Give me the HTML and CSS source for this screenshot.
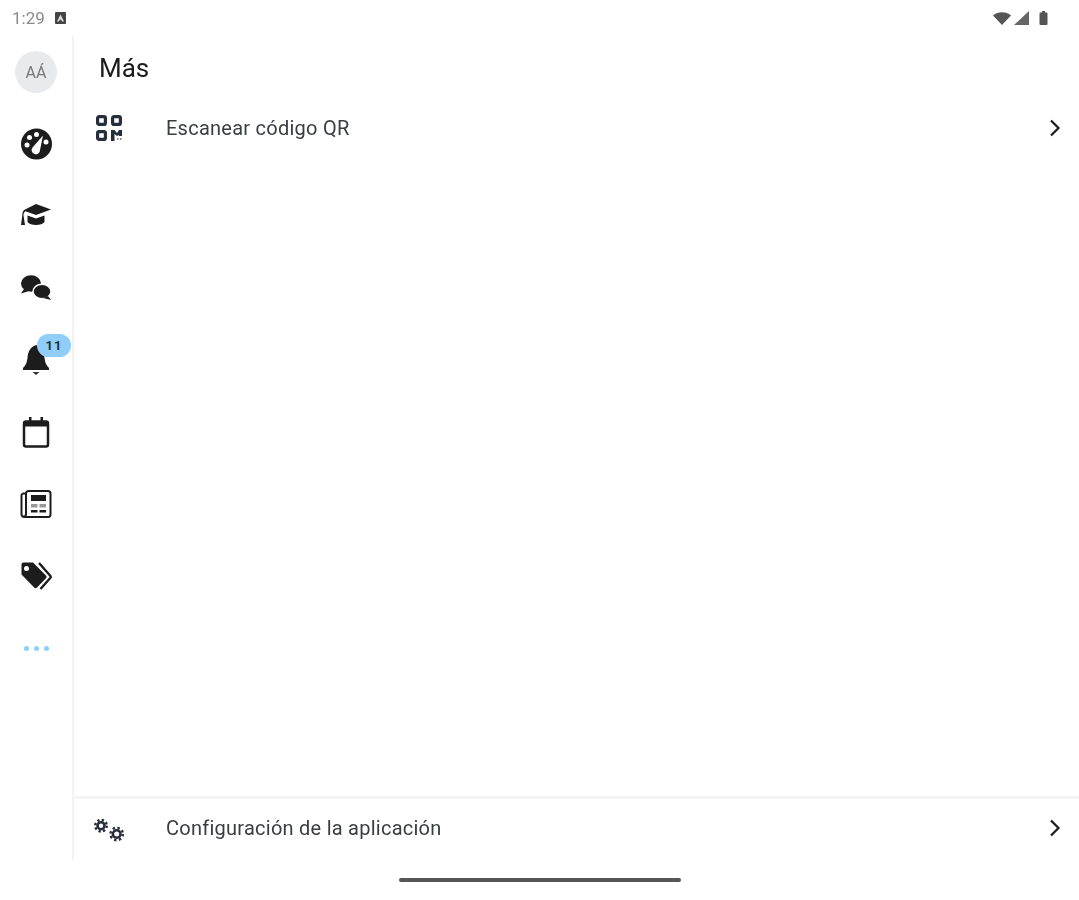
FILE: index.html
```html
<!DOCTYPE html>
<html lang="es">
	<head>
		<meta charset="UTF-8" />
		<meta name="viewport" content="width=device-width, initial-scale=1.0" />
		<title>Más</title>
		<link rel="stylesheet" href="styles.css">
	</head>
	<body>
		<div class="status-bar">
			<div class="status-left">
				<span class="status-time">1:29</span>
				<svg class="status-note" width="11" height="12" viewBox="0 0 11 12"><rect width="11" height="12" rx="1" fill="#444"/><path d="M5.500 2.500 9 9.500H7.400L5.500 7.300 3.600 9.500H2z" fill="#ddd"/></svg>
			</div>
			<div class="status-right">
				<svg class="status-wifi" width="18" height="13" viewBox="0 0 18 13"><path d="M0 3.500C5 -.8 13 -.8 18 3.500L9 13z" fill="#555"/></svg>
				<svg class="status-signal" width="15" height="14" viewBox="0 0 15 14"><path d="M15 0V14H0z" fill="#666"/></svg>
				<svg width="9" height="14" viewBox="0 0 9 14"><path d="M3 0h3v1.500h1.500a1 1 0 0 1 1 1V13a1 1 0 0 1-1 1H1.500a1 1 0 0 1-1-1V2.500a1 1 0 0 1 1-1H3z" fill="#555"/></svg>
			</div>
		</div>

		<div class="app">
			<nav class="rail">
				<div class="avatar">AÁ</div>

				<div class="rail-item">
					<svg width="32" height="32" viewBox="0 0 32 32"><circle cx="16.500" cy="16" r="15.500" fill="#1c1c1c"/><circle cx="7" cy="17" r="2.500" fill="#fff"/><circle cx="9.500" cy="9.500" r="2.500" fill="#fff"/><circle cx="16.500" cy="6.500" r="2.500" fill="#fff"/><circle cx="26" cy="14" r="2.500" fill="#fff"/><path d="M23 7.500 20 22a4.200 4.200 0 1 1-7.500-2.500z" fill="#fff"/></svg>
				</div>
				<div class="rail-item">
					<svg width="32" height="26" viewBox="0 0 32 26"><path d="M16 1 31 6.500 16 12 5.500 8.200C4 9 3.500 10.500 3.500 12.500L5 22H1l1.300-9.500C2.300 10 3 8 4 7z" fill="#1c1c1c"/><path d="M7.500 12.500 16 15.500 24.500 12.500V19C22 23 10 23 7.500 19z" fill="#1c1c1c"/></svg>
				</div>
				<div class="rail-item">
					<svg width="32" height="26" viewBox="0 0 32 26"><ellipse cx="11" cy="8.500" rx="10" ry="8.200" fill="#1c1c1c"/><path d="M4 14 1 18.500 9 16z" fill="#1c1c1c"/><ellipse cx="22" cy="16.500" rx="9" ry="7.200" fill="#1c1c1c" stroke="#fff" stroke-width="1.500"/><path d="M28 21 31 25 23 23z" fill="#1c1c1c"/></svg>
				</div>
				<div class="rail-item">
					<svg width="28" height="32" viewBox="0 0 28 32"><path d="M14 1C8 3 6 8 5.500 14 5 18 4 21 1 24H27C24 21 23 18 22.500 14 22 8 20 3 14 1z" fill="#1c1c1c"/><rect x="1" y="24" width="26" height="2" fill="#1c1c1c"/><path d="M10.500 28h7L14 31z" fill="#333"/></svg>
					<span class="badge">11</span>
				</div>
				<div class="rail-item">
					<svg width="28" height="32" viewBox="0 0 28 32"><rect x="2" y="5.500" width="24" height="25" rx="2" fill="#fff" stroke="#1c1c1c" stroke-width="2.500"/><rect x="2" y="5.500" width="24" height="5" fill="#1c1c1c"/><rect x="7" y="1" width="2.500" height="6" fill="#1c1c1c"/><rect x="18.500" y="1" width="2.500" height="6" fill="#1c1c1c"/></svg>
				</div>
				<div class="rail-item">
					<svg width="32" height="28" viewBox="0 0 32 28"><path d="M6 3.500H3.500a2 2 0 0 0-2 2V24a3 3 0 0 0 3 3H28a2.500 2.500 0 0 0 2.500-2.500V3.500A2.500 2.500 0 0 0 28 1H8.500A2.500 2.500 0 0 0 6 3.500V24a3 3 0 0 1-3 3" fill="none" stroke="#1c1c1c" stroke-width="2"/><rect x="11" y="5" width="15" height="6" fill="#1c1c1c"/><rect x="11" y="14" width="6.500" height="3.500" fill="#999"/><rect x="19.500" y="14" width="6.500" height="3.500" fill="#999"/><rect x="11" y="20" width="6.500" height="2.500" fill="#1c1c1c"/><rect x="19.500" y="20" width="6.500" height="2.500" fill="#1c1c1c"/></svg>
				</div>
				<div class="rail-item">
					<svg width="32" height="28" viewBox="0 0 32 28"><path d="M1.500 2.500A2 2 0 0 1 3.500.5H13L26 13.500a2 2 0 0 1 0 2.800L17 25.500a2 2 0 0 1-2.800 0L1.500 12.500zM6.500 4a2.500 2.500 0 1 0 0 5 2.500 2.500 0 0 0 0-5z" fill="#1c1c1c" fill-rule="evenodd"/><path d="M19 1 30 13.500a2 2 0 0 1 0 2.800L20.500 27" fill="none" stroke="#1c1c1c" stroke-width="2.400"/></svg>
				</div>
				<div class="rail-item">
					<div class="dots"><i></i><i></i><i></i></div>
				</div>
			</nav>

			<main class="content">
				<h1 class="title">Más</h1>

				<div class="row">
					<svg class="row-icon" width="28" height="28" viewBox="0 0 28 28"><g fill="none" stroke="#262d3b" stroke-width="3.200"><rect x="2.600" y="2.600" width="7.800" height="7.800" rx="1.500"/><rect x="17.600" y="2.600" width="7.800" height="7.800" rx="1.500"/><rect x="2.600" y="17.600" width="7.800" height="7.800" rx="1.500"/></g><path d="M16 16h3.500l2.500 3 2-3h3v6h-3v-1l-2 1-2.500-2v7H16z" fill="#262d3b"/><path d="M22 24h1.500v2H22zM25 24h1.500v2H25z" fill="#888"/></svg>
					<span class="row-label">Escanear código QR</span>
					<svg class="chevron" width="12" height="18" viewBox="0 0 12 18"><path d="M2 1.500 9.500 9 2 16.500" fill="none" stroke="#1c1c1c" stroke-width="2.200"/></svg>
				</div>

				<div class="spacer"></div>

				<div class="row row-bottom">
					<svg class="row-icon" width="32" height="26" viewBox="0 0 32 26"><g fill="none" stroke="#262d3b"><circle cx="7" cy="8.700" r="3.500" stroke-width="2.600"/><circle cx="7" cy="8.700" r="5.800" stroke-width="2.400" stroke-dasharray="2.300 2.256"/><circle cx="22.700" cy="17" r="3.800" stroke-width="2.600"/><circle cx="22.700" cy="17" r="6.200" stroke-width="2.400" stroke-dasharray="2.400 2.470"/></g></svg>
					<span class="row-label">Configuración de la aplicación</span>
					<svg class="chevron" width="12" height="18" viewBox="0 0 12 18"><path d="M2 1.500 9.500 9 2 16.500" fill="none" stroke="#1c1c1c" stroke-width="2.200"/></svg>
				</div>
			</main>
		</div>

		<div class="nav-bar"><div class="home-pill"></div></div>
	</body>
</html>
```
FILE: styles.css
```css
* {
	box-sizing: border-box;
}
body {
	margin: 0;
	height: 900px;
	overflow: hidden;
	background: #fff;
	font-family: Roboto, "Liberation Sans", sans-serif;
	color: #2b2e33;
	display: flex;
	flex-direction: column;
	filter: blur(0.5px);
}
.status-bar {
	height: 36px;
	padding: 0 31px 0 12px;
	display: flex;
	align-items: center;
	justify-content: space-between;
}
.status-left {
	display: flex;
	align-items: center;
	gap: 10px;
}
.status-time {
	font-size: 17px;
	color: #8a8a8a;
}
.status-right {
	display: flex;
	align-items: center;
}
.status-wifi {
	margin-right: 3px;
}
.status-signal {
	margin-right: 10px;
}
.app {
	height: 824px;
	display: flex;
}
.rail {
	width: 74px;
	border-right: 2px solid #f2f2f3;
	display: flex;
	flex-direction: column;
	align-items: center;
}
.avatar {
	width: 42px;
	height: 42px;
	margin-top: 15px;
	margin-bottom: 15px;
	border-radius: 50%;
	background: #e9eaec;
	color: #75787d;
	font-size: 16px;
	display: flex;
	align-items: center;
	justify-content: center;
}
.rail-item {
	position: relative;
	width: 72px;
	height: 72px;
	display: flex;
	align-items: center;
	justify-content: center;
}
.badge {
	position: absolute;
	left: 37px;
	top: 10px;
	width: 34px;
	height: 23px;
	border-radius: 12px;
	background: #90cdf9;
	color: #20303c;
	font-size: 13px;
	font-weight: 700;
	letter-spacing: 1px;
	display: flex;
	align-items: center;
	justify-content: center;
}
.dots {
	display: flex;
	gap: 5px;
}
.dots i {
	width: 5px;
	height: 5px;
	border-radius: 50%;
	background: #90cdf9;
}
.content {
	flex: 1;
	display: flex;
	flex-direction: column;
}
.title {
	margin: 0;
	height: 62px;
	padding: 17px 0 0 25px;
	font-size: 26px;
	line-height: 30px;
	font-weight: 400;
	color: #1c1c1c;
}
.row {
	height: 60px;
	position: relative;
	display: flex;
	align-items: center;
	padding-right: 18px;
}
.row-icon {
	position: absolute;
	left: 21px;
	top: 16px;
}
.row-label {
	margin-left: 92px;
	font-size: 20px;
	letter-spacing: 0.25px;
	color: #3a3d42;
	flex: 1;
}
.spacer {
	flex: 1;
}
.row-bottom {
	height: 64px;
	padding-bottom: 4px;
	border-top: 3px solid #f5f5f5;
}
.row-bottom .row-icon {
	left: 20px;
	top: 18px;
}
.nav-bar {
	height: 40px;
	display: flex;
	justify-content: center;
	padding-top: 18px;
}
.home-pill {
	width: 282px;
	height: 4px;
	border-radius: 2px;
	background: #555;
}
```
